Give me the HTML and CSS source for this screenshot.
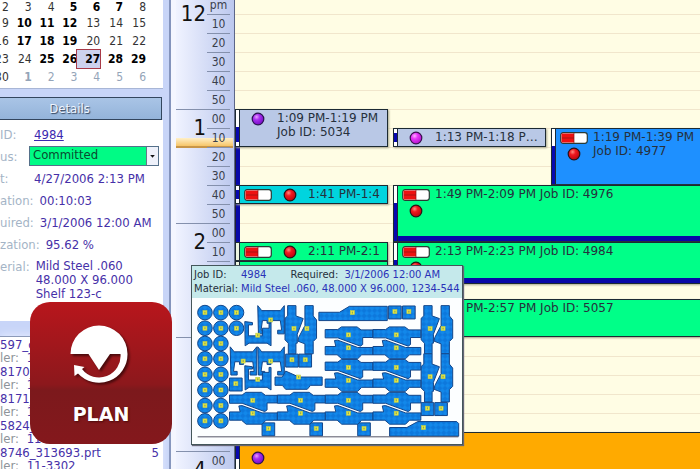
FILE: index.html
```
<!DOCTYPE html>
<html lang="en">
<head>
<meta charset="utf-8">
<title>Job schedule</title>
<link rel="stylesheet" href="styles.css">
</head>
<body>
<svg class="defs" aria-hidden="true">
  <defs>
    <radialGradient id="redFill" cx="38%" cy="32%" r="65%"><stop offset="0" stop-color="#ff8a80"/><stop offset=".4" stop-color="#f01820"/><stop offset="1" stop-color="#c00810"/></radialGradient>
    <radialGradient id="purpleFill" cx="38%" cy="32%" r="65%"><stop offset="0" stop-color="#e8a0ff"/><stop offset=".4" stop-color="#a830f0"/><stop offset="1" stop-color="#7a10c8"/></radialGradient>
    <radialGradient id="pinkFill" cx="38%" cy="32%" r="65%"><stop offset="0" stop-color="#ffb0ff"/><stop offset=".4" stop-color="#e838f8"/><stop offset="1" stop-color="#b818d0"/></radialGradient>
    <symbol id="red" viewBox="0 0 14 14"><circle cx="7" cy="7" r="5.8" fill="url(#redFill)" stroke="#2a1015" stroke-width="1.2"/></symbol>
    <symbol id="purple" viewBox="0 0 14 14"><circle cx="7" cy="7" r="5.8" fill="url(#purpleFill)" stroke="#2a1050" stroke-width="1.2"/></symbol>
    <symbol id="pink" viewBox="0 0 14 14"><circle cx="7" cy="7" r="5.8" fill="url(#pinkFill)" stroke="#3a1050" stroke-width="1.2"/></symbol>
    <symbol id="pill" viewBox="0 0 28 12"><rect x=".7" y=".7" width="26.6" height="10.6" rx="2.5" fill="#fff" stroke="#2a3a35" stroke-width="1.2"/><rect x="1.5" y="1.5" width="12.5" height="9" fill="#ee1111"/><path d="M14 1V11M2 6H14" stroke="#8a1515" stroke-width=".7"/></symbol>
  </defs>
</svg>
<div class="app">
  <aside class="side">
    <table class="month">
      <tbody>
        <tr><td>2</td><td>3</td><td>4</td><td class="busy">5</td><td class="busy">6</td><td class="busy">7</td><td>8</td></tr>
        <tr><td>9</td><td class="busy">10</td><td class="busy">11</td><td class="busy">12</td><td>13</td><td>14</td><td>15</td></tr>
        <tr><td>16</td><td class="busy">17</td><td class="busy">18</td><td class="busy">19</td><td>20</td><td>21</td><td>22</td></tr>
        <tr><td>23</td><td>24</td><td class="busy">25</td><td class="busy">26</td><td class="busy today">27</td><td class="busy">28</td><td class="busy">29</td></tr>
        <tr><td>30</td><td class="next busy">1</td><td class="next">2</td><td class="next">3</td><td class="next">4</td><td class="next">5</td><td class="next">6</td></tr>
      </tbody>
    </table>
    <h2 class="heading">Details</h2>
    <div class="details">
      <div class="field"><span class="label">ID:</span><a href="#job">4984</a></div>
      <div class="field"><label class="label" for="status">us:</label>
        <span class="picker"><select id="status"><option>Committed</option></select><svg class="arrow" viewBox="0 0 12 18" aria-hidden="true"><path d="M3.5 8H8.5L6 11Z" fill="#111"/></svg></span></div>
      <div class="field"><span class="label">t:</span><span>4/27/2006 2:13 PM</span></div>
      <div class="field"><span class="label">ation:</span><span>00:10:03</span></div>
      <div class="field"><span class="label">uired:</span><span>3/1/2006 12:00 AM</span></div>
      <div class="field"><span class="label">zation:</span><span>95.62 %</span></div>
      <div class="field"><span class="label">erial:</span><span class="lines">Mild Steel .060<br>48.000 X 96.000<br>Shelf 123-c</span></div>
    </div>
    <ul class="parts">
      <li><b>597_c</b><span><i>ler:</i> 11</span></li>
      <li><b>8170_</b><span><i>ler:</i> 11</span></li>
      <li><b>8171_</b><span><i>ler:</i> 11</span></li>
      <li><b>5824_</b><span><i>ler:</i> 11</span></li>
      <li><b>8746_313693.prt <em>5</em></b><span><i>ler:</i> 11-3302</span></li>
    </ul>
  </aside>

  <div class="ruler">
    <section class="hour"><strong>12</strong><ol><li>pm</li><li>10</li><li>20</li><li>30</li><li>40</li><li>50</li></ol></section>
    <section class="hour"><span class="now"></span><strong>1</strong><ol><li>00</li><li>10</li><li>20</li><li>30</li><li>40</li><li>50</li></ol></section>
    <section class="hour"><strong>2</strong><ol><li>00</li><li>10</li><li></li><li></li><li></li><li></li></ol></section>
    <section class="hour"><strong></strong><ol><li></li><li></li><li></li><li></li><li></li><li></li></ol></section>
    <section class="hour"><strong>4</strong><ol><li>00</li></ol></section>
  </div>

  <main class="schedule">
    <div class="track"></div>
    <article class="event a grey"><span class="strip mid"></span><div class="body"><span class="icons"><svg class="ball"><use href="#purple"/></svg></span><p>1:09 PM-1:19 PM<br>Job ID: 5034</p></div></article>
    <article class="event b grey"><span class="strip mid"></span><div class="body"><span class="icons"><svg class="ball"><use href="#pink"/></svg></span><p class="short">1:13 PM-1:18 PM Job</p></div></article>
    <article class="event c blue open"><span class="strip"></span><div class="body"><span class="icons"><svg class="pill"><use href="#pill"/></svg><svg class="ball"><use href="#red"/></svg></span><p>1:19 PM-1:39 PM<br>Job ID: 4977</p></div></article>
    <article class="event d cyan"><span class="strip mid"></span><div class="body"><span class="icons row"><svg class="pill"><use href="#pill"/></svg><svg class="ball"><use href="#red"/></svg></span><p>1:41 PM-1:4</p></div></article>
    <article class="event e green open late"><span class="strip"></span><div class="body"><span class="icons"><svg class="pill"><use href="#pill"/></svg><svg class="ball"><use href="#red"/></svg></span><p>1:49 PM-2:09 PM Job ID: 4976</p></div></article>
    <article class="event f green"><span class="strip free"></span><div class="body"><span class="icons row"><svg class="pill"><use href="#pill"/></svg><svg class="ball"><use href="#red"/></svg></span><p>2:11 PM-2:1</p></div></article>
    <article class="event g green"><span class="strip free"></span><div class="body"></div></article>
    <article class="event h green open late"><span class="strip"></span><div class="body"><span class="icons"><svg class="pill"><use href="#pill"/></svg><svg class="ball"><use href="#red"/></svg></span><p>2:13 PM-2:23 PM Job ID: 4984</p></div></article>
    <article class="event i green open"><span class="strip"></span><div class="body"><p class="tail">PM-2:57 PM Job ID: 5057</p></div></article>
    <article class="event j orange open"><span class="strip end"></span><div class="body"><span class="icons"><svg class="ball"><use href="#purple"/></svg></span></div></article>
  </main>

  <div class="tip">
    <dl>
      <div><dt>Job ID:</dt><dd>4984</dd><dt class="req">Required:</dt><dd>3/1/2006 12:00 AM</dd></div>
      <div><dt>Material:</dt><dd>Mild Steel .060, 48.000 X 96.000, 1234-544</dd></div>
    </dl>
    <svg class="nest" viewBox="18 114 813 441" aria-hidden="true">
      <defs>
        <pattern id="weave" width="16" height="16" patternUnits="userSpaceOnUse"><rect width="16" height="16" fill="#1288ea"/><path d="M0 8L8 0L16 8L8 16Z" fill="#0d78dc"/></pattern>
        <g id="tag"><rect x="-6" y="-6" width="12" height="12" fill="#f4ec38" stroke="#b8cc50" stroke-width="2"/><rect x="-2" y="-3" width="4" height="6" fill="#8aa860" stroke="none"/></g>
        <g id="disc"><circle r="22"/><use href="#tag"/></g>
        <g id="sq"><path d="M0 0H38V39H0Z"/><use href="#tag" x="19" y="17"/></g>
        <g id="pair"><path d="M0 9H38L49 1H96L108 10H144V33H113V54L106 59L38 34H0Z"/><path d="M0 60H32L28 42L38 41L98 63H144V85H110L98 97H50L36 85H0Z"/><use href="#tag" x="70" y="25"/><use href="#tag" x="70" y="64"/></g>
        <g id="duo"><path d="M8 0H33V31L55 39L37 86V113H33V145H10V113L0 103V38L8 31Z"/><path d="M60 0H85V31L95 43V98L85 108V145H60V115L39 107L41 96L60 60Z"/><use href="#tag" x="27" y="69"/><use href="#tag" x="66" y="69"/></g>
        <g id="yoke"><path d="M216 137L228 152H284L296 137V222H276V211H288L284 182H256V190H244V182H230L226 211H237V222H218Z"/><use href="#tag" x="255" y="180"/></g>
        <g id="cradle"><path d="M177 185L200 188V195H188V228H230V205H250V190H256V258L244 250H190L178 258Z"/><use href="#tag" x="216" y="226"/></g>
      </defs>
      <g fill="url(#weave)" stroke="#12458a" stroke-width="3">
        <use href="#disc" x="57" y="158"/><use href="#disc" x="105" y="158"/><use href="#disc" x="152" y="158"/>
        <use href="#disc" x="57" y="205"/><use href="#disc" x="105" y="205"/><use href="#disc" x="152" y="205"/>
        <use href="#disc" x="57" y="251"/><use href="#disc" x="105" y="251"/>
        <use href="#disc" x="57" y="297"/><use href="#disc" x="105" y="297"/>
        <use href="#disc" x="57" y="344"/><use href="#disc" x="105" y="344"/>
        <use href="#disc" x="57" y="391"/><use href="#disc" x="105" y="391"/>
        <use href="#disc" x="57" y="438"/><use href="#disc" x="105" y="438"/>
        <use href="#disc" x="57" y="484"/><use href="#disc" x="105" y="484"/>
        <use href="#yoke"/><use href="#yoke" x="-83" y="124"/><use href="#yoke" y="124"/>
        <use href="#cradle"/><use href="#cradle" y="133"/>
        <use href="#sq" x="131" y="355"/><use href="#sq" x="300" y="283"/><use href="#sq" x="340" y="283"/>
        <use href="#sq" x="229" y="490"/><use href="#sq" x="373" y="490"/><use href="#sq" x="517" y="490"/>
        <use href="#sq" x="610" y="138"/><use href="#sq" x="652" y="138"/>
        <use href="#sq" x="708" y="429"/><use href="#sq" x="749" y="429"/>
        <use href="#duo" x="298" y="137"/><use href="#duo" x="708" y="137"/><use href="#duo" x="708" y="282"/>
        <use href="#pair" x="419" y="200"/><use href="#pair" x="563" y="200"/>
        <use href="#pair" x="419" y="298"/><use href="#pair" x="563" y="298"/>
        <use href="#pair" x="419" y="397"/><use href="#pair" x="563" y="397"/>
        <use href="#pair" x="131" y="397"/><use href="#pair" x="275" y="397"/>
        <path d="M400 157H462L492 139H606V182H400Z"/><use href="#tag" x="501" y="158"/>
        <path d="M268 352H290L300 334L340 352H410V377H375L365 389H300L290 377H268Z"/><use href="#tag" x="339" y="352"/>
        <path d="M613 504H665L698 486H815L821 492V530H613Z"/><use href="#tag" x="715" y="504"/>
      </g>
      <path d="M35 532H820" stroke="#556" stroke-width="3"/>
    </svg>
  </div>

  <div class="badge">
    <svg viewBox="72 325 62 62" aria-hidden="true"><path fill="#fff" d="M72.5 354A28.5 28.5 0 0 1 129.5 354A28.5 28.5 0 0 1 80 373.500L76.5 376L76 365L86.500 367L84 369A21.500 21.500 0 0 0 122.500 354H112L101 370L90.500 354Z"/></svg>
    <span>PLAN</span>
  </div>
</div>
</body>
</html>
```
FILE: styles.css
```
* { box-sizing: border-box; }
body, h2, p, ul, ol, dl, dd { margin: 0; padding: 0; }
ul, ol { list-style: none; }
body { font-family: "DejaVu Sans", sans-serif; font-size: 12px; color: #26303c; }
.defs { position: absolute; width: 0; height: 0; }
.app {
  position: relative;
  display: grid;
  grid-template-columns: 176px 59px 1fr;
  height: 100vh;
  overflow: hidden;
}

/* Sidebar */
.side {
  display: flex;
  flex-direction: column;
  min-width: 0;
  overflow: hidden;
  padding-right: 13px;
  font-family: "DejaVu Sans Condensed", "DejaVu Sans", sans-serif;
  font-size: 13px;
  background: linear-gradient(to left, #f4f6ff 0 5px, #8494bc 5px 7px, #c8d5f8 7px 13px, #c8d5f8 13px);
}
.month {
  table-layout: fixed;
  width: 177px;
  margin-left: -14px;
  padding: 0 17px 2px 0;
  border-spacing: 0;
  border-bottom: 1px solid #a8b6d6;
  background: #fff;
  font-size: 12px;
  color: #333;
}
.month td { height: 18px; padding: 0; line-height: 18px; text-align: right; }
.month tr:first-child td { height: 14px; line-height: 10px; }
.month .busy { font-weight: bold; color: #000; }
.month .next { color: #94a4b8; }
.month .today { outline: 1px solid #a83a48; background: #cdd2ee; }
.heading {
  height: 23px;
  margin: 8px 1px 0 0;
  border: 1px solid #33465e;
  border-left: 0;
  background: linear-gradient(#a9c4e6, #94b4da);
  font-size: 13px;
  font-weight: normal;
  line-height: 22px;
  text-align: center;
  text-indent: -22px;
  color: #eef4ff;
  text-shadow: 1px 1px 1px #33445c;
}
.details { height: 201px; padding-top: 4px; background: #fff; color: #4630a8; }
.field { display: flex; gap: 6px; line-height: 21px; height: 22px; white-space: nowrap; }
.label { min-width: 28px; color: #a4b4c6; }
.field a { color: #3a28b0; }
.lines { line-height: 14px; padding-top: 3px; }
.picker { position: relative; flex: 1; margin: 0 4px 0 -5px; }
.picker select {
  display: block;
  width: 100%;
  height: 20px;
  padding: 0 14px 2px 3px;
  border: 1px solid #55708a;
  border-radius: 0;
  appearance: none;
  background: #00fb85;
  font: inherit;
  line-height: 16px;
  color: #0a4a30;
}
.arrow { position: absolute; top: 1px; right: 1px; width: 12px; height: 18px; background: #eef1fa; border-left: 1px solid #678; }
.parts { flex: 1; margin-top: 15px; padding-top: 1px; border-top: 1px solid #8c9ab8; background: #fff; color: #4630a8; box-shadow: 0 -1px 8px #e4ecff; }
.parts li { display: grid; grid-template-rows: 13px 14px; line-height: 13px; white-space: nowrap; }
.parts b { display: flex; justify-content: space-between; padding-right: 4px; font-weight: normal; }
.parts i, .parts em { font-style: normal; }
.parts i { margin-right: 4px; color: #8e9499; }

/* Time ruler */
.ruler { background: linear-gradient(to right, #f0f3ff, #bcc8ee); margin-top: -5px; border-right: 1px solid #5c6688; font-family: "DejaVu Sans Condensed", "DejaVu Sans", sans-serif; }
.hour { position: relative; display: grid; grid-template-columns: 30px 23px; gap: 1px; height: 114px; margin-right: 4px; border-top: 1px solid #8490ac; }
.hour strong { position: relative; padding-top: 5px; font-size: 22px; font-weight: normal; line-height: 26px; text-align: right; color: #111; }
.hour ol { position: relative; }
.hour li { height: 19px; line-height: 18px; text-align: center; border-bottom: 1px solid #8490ac; color: #3a3f4c; }
.hour li:last-child { border-bottom: 0; }
.now { position: absolute; top: 28px; left: 0; right: -3px; height: 10px; background: linear-gradient(#fff0c8, #f6c568); border-bottom: 2px solid #c89648; }

/* Schedule */
.schedule {
  display: grid;
  grid-template-columns: 153fr 153fr 149fr;
  grid-template-rows: repeat(25, 19px);
  column-gap: 5px;
  min-width: 0;
  margin-top: -5px;
  background: repeating-linear-gradient(#f1e6cc 0 1px, #fffde4 1px 19px);
}
.track { grid-area: 7 / 1 / 19 / 2; width: 5px; background: #0808a8; border-left: 1px solid #223; }
.event { display: flex; min-width: 0; border: 1px solid #1c2a33; box-shadow: 1px 1px 2px #a8a890; }
.open { border-right: 0; }
.strip { flex: 0 0 4px; border-right: 1px solid #1c2a33; background: linear-gradient(#fff 0 17px, #0808b0 17px); }
.strip.mid { background: linear-gradient(#fff 0 4px, #0808b0 4px calc(100% - 4px), #fff calc(100% - 4px)); }
.a .strip.mid { background: linear-gradient(#fff 0 17px, #0808b0 17px calc(100% - 4px), #fff calc(100% - 4px)); }
.strip.free { background: #eef6e0; }
.strip.end { background: linear-gradient(#0808b0 0 26px, #fff 26px); }
.body { display: flex; flex: 1; min-width: 0; overflow: hidden; padding: 0 4px; }
.body p { padding-top: 1px; line-height: 14px; white-space: nowrap; }
.icons { display: flex; flex: 0 0 33px; flex-direction: column; gap: 3px; padding-top: 2px; }
.icons.row { flex: 0 0 64px; flex-direction: row; gap: 11px; }
.pill { flex: none; width: 28px; height: 12px; margin-top: 1px; }
.ball { flex: none; width: 14px; height: 14px; margin-left: 7px; }
.row .ball { margin-left: 0; }
.grey { background: #b9c8e6; }
.blue { background: #1e90ff; }
.cyan { background: #00d4de; }
.green { background: #00ff88; }
.orange { background: #ffaa00; }
.late .body { border-bottom: 5px solid #0808a8; }
.body .short { overflow: hidden; text-overflow: ellipsis; }
.body .tail { padding-left: 64px; }
.a { grid-area: 7 / 1 / 9 / 2; }
.b { grid-area: 8 / 2 / 9 / 3; }
.c { grid-area: 8 / 3 / 11 / 4; }
.d { grid-area: 11 / 1 / 12 / 2; }
.e { grid-area: 11 / 2 / 14 / 4; }
.f { grid-area: 14 / 1 / 15 / 2; }
.g { grid-area: 15 / 1 / 16 / 2; }
.h { grid-area: 14 / 2 / 16 / 4; margin-bottom: -4px; }
.i { grid-area: 17 / 2 / 19 / 4; }
.j { grid-area: 24 / 1 / 26 / 4; }
.j .icons { padding-top: 18px; }

/* Job tooltip */
.tip { position: absolute; top: 265px; left: 191px; width: 272px; overflow: hidden; border: 1px solid #44565a; background: #fcfeff; box-shadow: 1px 1px 1px #667; font-size: 10px; }
.tip dl { height: 32px; padding: 2px 0 0 2px; background: #c5e9eb; }
.tip dl div { display: flex; line-height: 14px; white-space: nowrap; }
.tip dt { flex: 0 0 47px; }
.tip .req { flex-basis: 54px; margin-left: 24px; }
.tip dd { color: #2a32b8; }
.nest { display: block; width: 100%; }

/* Module badge */
.badge {
  position: absolute;
  top: 302px;
  left: 30px;
  display: flex;
  flex-direction: column;
  align-items: center;
  width: 142px;
  height: 142px;
  padding-top: 23px;
  border-radius: 20px;
  background: linear-gradient(#b8161c, #8c181c 58%, #7c191c 62%, #84181c);
  color: #fff;
  font-size: 19px;
  font-weight: bold;
}
.badge svg { width: 62px; height: 62px; filter: drop-shadow(2px 2px 1px #4a0a0c); }
.badge span { margin-top: 15px; line-height: 24px; text-shadow: 1px 1px 2px #4a0a0c; }
```
